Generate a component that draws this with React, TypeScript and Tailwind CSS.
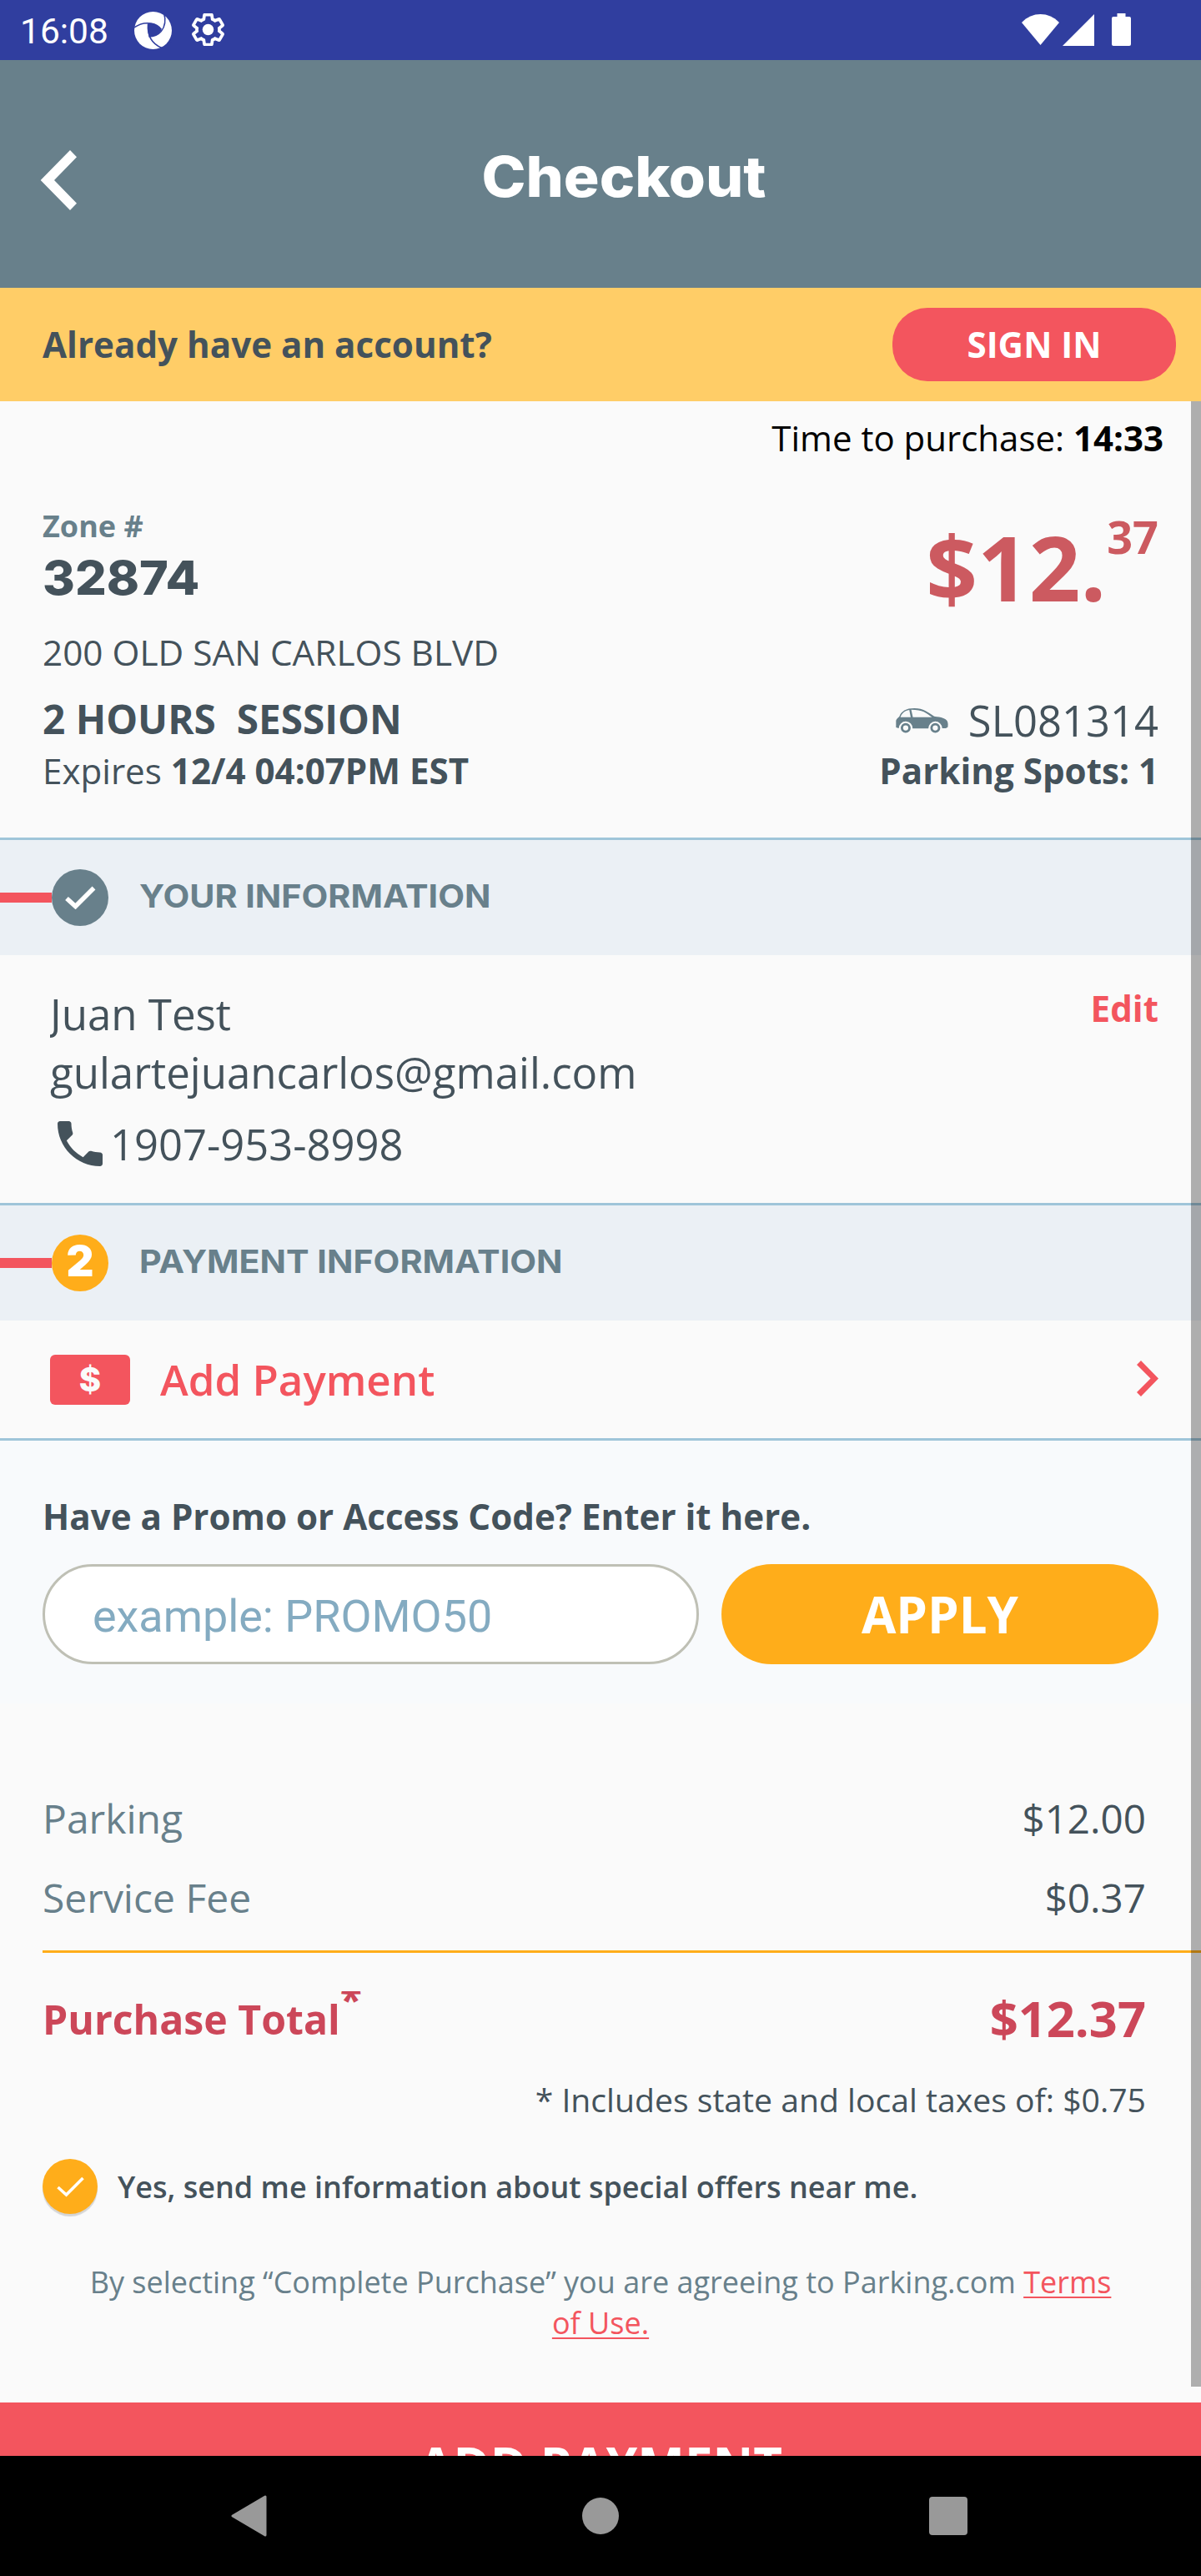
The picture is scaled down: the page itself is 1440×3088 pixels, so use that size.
import type { ReactNode } from "react";
import { MdPhone } from "react-icons/md";

function StatusBar() {
  return (
    <div className="flex h-[72px] items-start bg-[#303e9f] pl-6 pr-[84px] font-['Roboto',sans-serif] text-white">
      <span className="w-[137px] text-[42.5px] leading-[76px]">16:08</span>
      <svg className="mt-[14px] h-[45px] w-[45px]" viewBox="0 0 45 45">
        <circle cx="22.5" cy="22.5" r="22.5" fill="#fff" />
        <g fill="none" stroke="#303e9f" strokeWidth="1.5">
          <path d="M0 19C6 14.500 13 13 20 14C26 15 30 17.500 32.500 21.500" />
          <path d="M35.500 1.500C38 10 37.500 17 32.300 23.500C28.500 28 24 30 17.500 30" />
          <path d="M16.500 14.500C15.500 27 20 38 33 43.500" />
        </g>
        <path d="M16.500 14.200C23 13.500 29 16 32.500 22.300C29 27.500 24.500 30 17.800 30.200C16.200 25 15.800 19 16.500 14.200Z" fill="#303e9f" />
        <path d="M45 36L38 41L34 45H45Z" fill="#303e9f" />
      </svg>
      <svg className="ml-6 mt-4 h-[39px] w-[39px]" viewBox="1.6 1.6 20.8 20.8">
        <path
          d="M19.14 12.94c.04-.3.06-.61.06-.94 0-.32-.02-.64-.07-.94l2.03-1.58c.18-.14.23-.41.12-.61l-1.92-3.32c-.12-.22-.37-.29-.59-.22l-2.390.96c-.5-.38-1.03-.7-1.62-.94L14.400 2.810c-.04-.24-.24-.41-.48-.41h-3.840c-.24 0-.43.17-.47.41L9.250 5.350C8.660 5.590 8.120 5.920 7.630 6.290L5.240 5.330c-.22-.08-.47 0-.59.22L2.740 8.870C2.620 9.080 2.660 9.340 2.860 9.480l2.030 1.580C4.840 11.360 4.800 11.690 4.800 12s.02.64.07.94l-2.030 1.580c-.18.14-.23.41-.12.61l1.920 3.320c.12.22.37.29.59.22l2.390-.96c.5.38 1.030.7 1.620.94l.36 2.540c.05.24.24.41.48.41h3.840c.24 0 .44-.17.47-.41l.36-2.540c.59-.24 1.130-.56 1.620-.94l2.390.96c.22.08.47 0 .59-.22l1.920-3.320c.12-.22.07-.47-.12-.61L19.140 12.940z"
          fill="none"
          stroke="#fff"
          strokeWidth="2"
        />
        <circle cx="12" cy="12" r="3.600" fill="#fff" />
      </svg>
      <svg className="ml-auto mt-[17px] h-[37px] w-[45px]" viewBox="0 0 45 37" fill="#fff">
        <path d="M0 10C12.500 -3.300 32.500 -3.300 45 10L22.500 37Z" />
      </svg>
      <svg className="ml-1 mt-[17px] h-[38px] w-[38px]" viewBox="0 0 38 38" fill="#fff">
        <path d="M38 0V38H0Z" />
      </svg>
      <svg className="ml-[21px] mt-4 h-[39px] w-[23px]" viewBox="0 0 23 39" fill="#fff">
        <path d="M6.500 0H16.500V4H21Q23 4 23 6V37Q23 39 21 39H2Q0 39 0 37V6Q0 4 2 4H6.500Z" />
      </svg>
    </div>
  );
}

function CarIcon() {
  return (
    <svg className="h-[30px] w-[63px]" viewBox="41 24 190 90" fill="#68808b">
      <path
        fillRule="evenodd"
        d="M42 68C44 62 50 58 54 54C62 34 78 24 108 24C142 24 156 38 180 53C206 56 222 60 227 70C231 78 230 86 229 92L222 96H209A25 25 0 0 0 159 97H102A25 25 0 0 0 52 96L42 93ZM58 56H95L90 30C74 33 64 41 58 56ZM103 56H172C152 41 138 29 97 29Z"
      />
      <path fillRule="evenodd" d="M59 95a18 18 0 1 0 36 0a18 18 0 1 0-36 0ZM67.500 95a9.500 9.500 0 1 1 19 0a9.500 9.500 0 1 1-19 0Z" />
      <path fillRule="evenodd" d="M166 95a18 18 0 1 0 36 0a18 18 0 1 0-36 0ZM174.500 95a9.500 9.500 0 1 1 19 0a9.500 9.500 0 1 1-19 0Z" />
    </svg>
  );
}

function StepHeader({ badge, title }: { badge: ReactNode; title: string }) {
  return (
    <div className="flex h-[141px] items-center border-t-[3px] border-[#9fc5d9] bg-[#ebf0f5]">
      <div className="h-3 w-[62px] bg-[#f3555e]" />
      {badge}
      <h2 className="mb-1 ml-[37px] origin-left scale-x-[1.072] font-['Inter',sans-serif] text-[38.500px] font-bold text-[#68808b]">
        {title}
      </h2>
    </div>
  );
}

function PriceRow({ label, value }: { label: string; value: string }) {
  return (
    <div className="flex justify-between pr-[66px] text-[48px] leading-[66px]">
      <span className="text-[#68808b]">{label}</span>
      <span className="text-[47.600px]">{value}</span>
    </div>
  );
}

export default function App() {
  return (
    <div className="h-[3088px] w-[1440px] overflow-hidden bg-[#fafafa] font-['Open_Sans',sans-serif] text-[42.150px] leading-[58px] text-[#44525b]">
      <StatusBar />

      <header className="flex h-[273px] items-start bg-[#68808b] pl-12 pr-[36px] text-white">
        <svg className="mt-[108px] h-[72px] w-11" viewBox="0 0 44 72" fill="#fff">
          <path d="M.700 36L36 0L44 8.300L17 36L44 63.700L36 72Z" />
        </svg>
        <h1 className="mt-[100px] flex-1 scale-x-[1.065] text-center font-['Inter',sans-serif] text-[67px] font-extrabold leading-[80px]">
          Checkout
        </h1>
      </header>

      <div className="flex h-[136px] items-center justify-between bg-[#ffcd67] pl-[51px] pr-[30px] font-bold">
        <span>Already have an account?</span>
        <button className="h-[88px] w-[340px] rounded-[42px] bg-[#f3555e] text-white">SIGN IN</button>
      </div>

      <main className="relative h-[2463px] overflow-hidden">
        <p className="pr-[45px] pt-[15px] text-right text-[42px] text-black">
          Time to purchase: <b>14:33</b>
        </p>

        <section className="flex justify-between px-[51px] pb-[51px] pt-[52px]">
          <div>
            <p className="text-[36px] font-bold leading-[49px] text-[#68808b]">Zone #</p>
            <p className="mt-1 origin-left scale-x-[1.04] font-['Inter',sans-serif] text-[57px] font-extrabold leading-[68px]">32874</p>
            <p className="mt-[26px] text-[42.300px]">200 OLD SAN CARLOS BLVD</p>
            <p className="mt-[18px] whitespace-pre text-[47.700px] font-bold leading-[66px]">{"2 HOURS  SESSION"}</p>
            <p>
              Expires <b>12/4 04:07PM EST</b>
            </p>
          </div>
          <div className="flex flex-col items-end">
            <div className="flex items-start font-bold text-[#cc5a60]">
              <span className="mr-px text-[108px] leading-[148px]">$12.</span>
              <span className="text-[54px] leading-[74px]">37</span>
            </div>
            <div className="mt-[78px] flex items-center gap-6 text-[50.700px] leading-[63px]">
              <CarIcon />
              <span>SL081314</span>
            </div>
            <p className="font-bold">Parking Spots: 1</p>
          </div>
        </section>

        <StepHeader
          title="YOUR INFORMATION"
          badge={
            <div className="flex size-[68px] items-center justify-center rounded-full bg-[#68808b]">
              <svg className="h-[28px] w-[37px]" viewBox="0 0 37 28" fill="none" stroke="#fff" strokeWidth="5.500">
                <path d="M2 15L12.500 24.500L34.500 2.500" />
              </svg>
            </div>
          }
        />
        <section className="flex h-[297px] items-start justify-between pl-[60px] pr-[51px] pt-[35px]">
          <div className="overflow-hidden text-[51px] leading-[70px]">
            <p>Juan Test</p>
            <p>gulartejuancarlos@gmail.com</p>
            <p className="mt-[15px] flex items-start">
              <MdPhone className="size-[72px]" />
              <span className="pt-[2px] text-[50.700px]">1907-953-8998</span>
            </p>
          </div>
          <a className="font-bold text-[#f3555e]">Edit</a>
        </section>

        <StepHeader
          title="PAYMENT INFORMATION"
          badge={
            <div className="flex size-[68px] items-center justify-center rounded-full bg-[#ffad1a] font-['Inter',sans-serif] text-[51px] font-black text-white">
              <span className="-mt-1">2</span>
            </div>
          }
        />
        <section className="flex h-[141px] items-center pl-[60px] pr-[51px] text-[#f3555e]">
          <div className="flex h-[60px] w-24 items-center justify-center rounded-md bg-[#f3555e] font-['Inter',sans-serif] text-[40px] font-extrabold text-[#fafafa]">
            $
          </div>
          <span className="-mt-px ml-9 text-[51px] font-semibold leading-[70px]">Add Payment</span>
          <svg className="-mt-[2px] ml-auto h-[43px] w-[26px]" viewBox="0 0 26 43" fill="currentColor">
            <path d="M5 0L26 21.500L5 43L0 38L16.500 21.500L0 5Z" />
          </svg>
        </section>

        <section className="h-[318px] border-t-[3px] border-[#9fc5d9] bg-[#f8fafc] px-[51px] pt-[62px]">
          <p className="font-bold">Have a Promo or Access Code? Enter it here.</p>
          <div className="mt-7 flex gap-[27px]">
            <div className="flex h-[120px] w-[787px] items-center rounded-full border-[3px] border-[#bfc0b5] bg-white pl-[57px] pt-[5px] font-['Roboto',sans-serif] text-[53.900px] text-[#84abc1]">
              example: PROMO50
            </div>
            <button className="h-[120px] flex-1 rounded-full bg-[#ffad1a] text-[60px] font-bold text-white">APPLY</button>
          </div>
        </section>

        <section className="pl-[51px] pt-[105px]">
          <PriceRow label="Parking" value="$12.00" />
          <div className="mt-[29px]">
            <PriceRow label="Service Fee" value="$0.37" />
          </div>
          <div className="mt-[30px] h-[3px] bg-[#ffad1a]" />
          <div className="mt-[38px] flex items-start pr-[66px] font-bold text-[#cc4759]">
            <span className="mt-[8px] text-[48.200px] leading-[66px]">Purchase Total</span>
            <span className="mt-[8px] h-[44px] overflow-hidden text-[48px]">
              <span className="-mt-[23px] block leading-[66px]">*</span>
            </span>
            <span className="ml-auto text-[59.600px] leading-[80px]">$12.37</span>
          </div>
          <p className="mt-[31px] pr-[66px] text-right text-[39.150px] leading-[54px]">* Includes state and local taxes of: $0.75</p>
          <label className="mt-11 flex items-center gap-6">
            <span className="flex size-[66px] items-center justify-center rounded-full bg-[#ffad1a] shadow-[0_3px_1px_rgba(0,0,0,0.150)]">
              <svg className="h-[25px] w-[33px]" viewBox="0 0 33 25" fill="none" stroke="#fff" strokeWidth="3.600">
                <path d="M1.500 13L11.500 22L31.500 2" />
              </svg>
            </span>
            <span className="pt-[2px] text-[36px] font-semibold">Yes, send me information about special offers near me.</span>
          </label>
        </section>
        <p className="mt-[57px] px-[102px] text-center text-[36px] leading-[49px] text-[#68808b]">
          By selecting “Complete Purchase” you are agreeing to Parking.com{" "}
          <a className="text-[#f3555e] underline decoration-2 underline-offset-4">Terms of Use.</a>
        </p>

        <button className="mt-[71px] block h-[140px] w-full bg-[#f3555e] pb-[24px] pt-[34px] text-[60px] font-bold leading-[82px] text-white">
          ADD PAYMENT
        </button>

        <div className="absolute right-0 top-0 h-[2380px] w-3 bg-black/30" />
      </main>

      <nav className="flex h-36 items-center justify-between bg-black pl-[277px] pr-[280px]">
        <svg className="h-[50px] w-[43px]" viewBox="0 0 43 50" fill="#999" stroke="#999" strokeWidth="3" strokeLinejoin="round">
          <path d="M2 25L41 2V48Z" />
        </svg>
        <div className="ml-[6px] size-11 rounded-full bg-[#999]" />
        <div className="size-[46px] rounded-[4px] bg-[#999]" />
      </nav>
    </div>
  );
}
